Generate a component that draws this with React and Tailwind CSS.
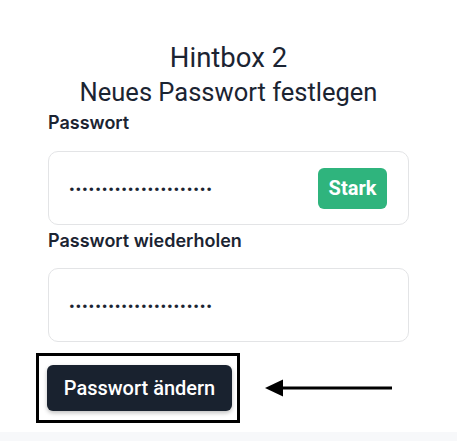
export default function App() {
  const dots = "•".repeat(22);
  return (
    <div className="w-full h-[441px] bg-white flex flex-col" style={{ fontFamily: "Roboto, 'Liberation Sans', sans-serif" }}>
      <div className="w-[361px] mx-auto flex flex-col text-[#1b2432]">
        <h1 className="mt-[42px] text-center text-[27.5px] leading-[32px] font-normal">Hintbox 2</h1>
        <h2 className="mt-[3px] text-center text-[25.5px] leading-[30px] font-normal">Neues Passwort festlegen</h2>
        <label className="mt-[4px] text-[18px] leading-[24px] font-semibold font-['Inter',sans-serif]">Passwort</label>
        <div className="mt-[16px] h-[74px] rounded-[10px] border border-[#e3e4e6] flex items-center justify-between pl-[20px] pr-[21px]">
          <span className="text-[17px] leading-[20px] tracking-[0.8px] text-[#1b2432] pt-[1px]">{dots}</span>
          <span className="h-[41px] w-[69px] rounded-[6px] bg-[#2fb47d] text-white text-[20px] font-bold flex items-center justify-center">Stark</span>
        </div>
        <label className="mt-[4px] text-[18px] leading-[24px] font-semibold font-['Inter',sans-serif]">Passwort wiederholen</label>
        <div className="mt-[15px] h-[74px] rounded-[10px] border border-[#e3e4e6] flex items-center pl-[20px] pr-[21px]">
          <span className="text-[17px] leading-[20px] tracking-[0.8px] text-[#1b2432] pt-[1px]">{dots}</span>
        </div>
        <div className="mt-[11px] flex items-center">
          <div className="ml-[-12px] border-[3px] border-black pl-[8px] pr-[5px] py-[9px]">
            <button className="h-[46px] w-[185px] rounded-[6px] bg-[#19222f] text-white text-[20px] font-medium shadow-[0_2px_4px_rgba(0,0,0,0.25)]">Passwort ändern</button>
          </div>
          <svg className="ml-[25px]" width="127" height="18" viewBox="0 0 127 18">
            <polygon points="0,9 18,0.5 18,17.5" fill="#000" />
            <rect x="14" y="7.5" width="113" height="3" fill="#000" />
          </svg>
        </div>
      </div>
      <div className="mt-auto h-[9px] bg-[#f7f8fa]" />
    </div>
  );
}
